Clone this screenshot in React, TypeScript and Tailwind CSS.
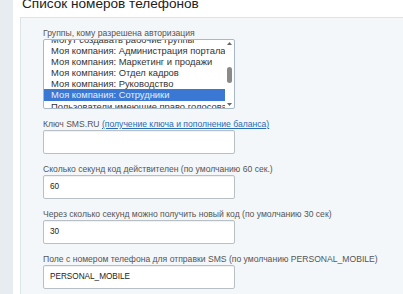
const groups = [
  "Могут создавать рабочие группы",
  "Моя компания: Администрация портала",
  "Моя компания: Маркетинг и продажи",
  "Моя компания: Отдел кадров",
  "Моя компания: Руководство",
  "Моя компания: Сотрудники",
  "Пользователи имеющие право голосовать за авторитет",
];

const fields = [
  { label: "Сколько секунд код действителен (по умолчанию 60 сек.)", value: "60" },
  { label: "Через сколько секунд можно получить новый код (по умолчанию 30 сек)", value: "30" },
  {
    label: "Поле с номером телефона для отправки SMS (по умолчанию PERSONAL_MOBILE)",
    value: "PERSONAL_MOBILE",
  },
];

function TextInput({ value }: { value?: string }) {
  return (
    <div className="flex h-[24px] w-[192px] items-center rounded-[2px] border border-[#b9c0c5] bg-white px-[6px] text-[8.2px] text-[#222] shadow-[inset_0_1px_1px_rgba(0,0,0,0.06)]">
      {value}
    </div>
  );
}

function GroupSelect() {
  return (
    <div className="flex h-[70px] w-[192px] overflow-hidden rounded-[2px] border border-[#a9b8c6] bg-white">
      <div className="min-w-0 flex-1 overflow-hidden">
        <div className="-mt-[6px]">
          {groups.map((g) => {
            const selected = g === "Моя компания: Сотрудники";
            return (
              <div
                key={g}
                className={
                  "h-[11.1px] overflow-hidden whitespace-nowrap pl-[7px] text-[9.4px] leading-[11.1px] " +
                  (selected ? "bg-[#3b78d3] text-[#e6edf8]" : "text-[#333]")
                }
              >
                {g}
              </div>
            );
          })}
        </div>
      </div>
      <div className="flex w-[9px] flex-col items-center py-[1px]">
        <svg width="7" height="5" viewBox="0 0 7 5">
          <path d="M3.5 1 L6 4 L1 4 Z" fill="#666" />
        </svg>
        <div className="mt-[21px] h-[16px] w-[5px] rounded-full bg-[#8a8a8a]" />
        <div className="flex-1" />
        <svg width="7" height="5" viewBox="0 0 7 5">
          <path d="M1 1 L6 1 L3.5 4 Z" fill="#666" />
        </svg>
      </div>
    </div>
  );
}

export default function App() {
  return (
    <div
      className="flex h-[294px] w-[403px] overflow-hidden bg-white"
      style={{ fontFamily: '"Liberation Sans", Arial, sans-serif' }}
    >
      <div className="w-[13px] shrink-0 bg-[#e6ecef]" />
      <div className="flex min-w-0 flex-1 flex-col">
        <div className="h-[17px] shrink-0 overflow-hidden pl-[9px]">
          <h2 className="-mt-[3px] whitespace-nowrap text-[13.6px] leading-[14px] text-[#222]">
            Список номеров телефонов
          </h2>
        </div>
        <div className="ml-[7px] flex-1 border-l border-t border-[#dde4e8] bg-[#f4f7f9] pl-[22px] pt-[10px]">
          <div className="whitespace-nowrap text-[8.6px] leading-[11px] text-[#555]">
            Группы, кому разрешена авторизация
          </div>
          <GroupSelect />

          <div className="mt-[10px] whitespace-nowrap text-[8.6px] leading-[11px] text-[#555]">
            Ключ SMS.RU{" "}
            <a href="#" className="text-[#2a6bb5] underline">
              (получение ключа и пополнение баланса)
            </a>
          </div>
          <TextInput />

          {fields.map((f) => (
            <div key={f.label} className="mt-[10px]">
              <div className="whitespace-nowrap text-[8.6px] leading-[11px] text-[#555]">{f.label}</div>
              <TextInput value={f.value} />
            </div>
          ))}
        </div>
      </div>
    </div>
  );
}
